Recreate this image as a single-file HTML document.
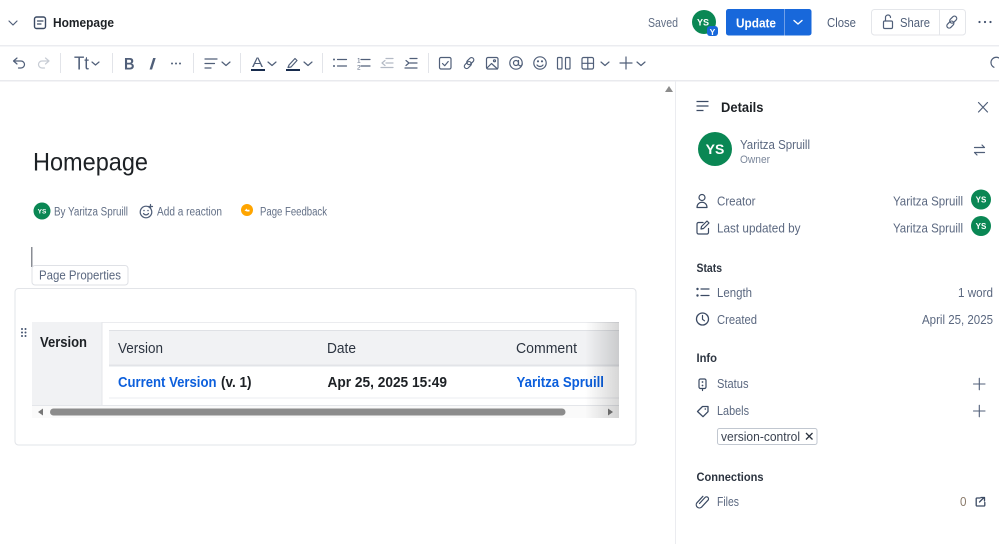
<!DOCTYPE html>
<html><head><meta charset="utf-8"><title>Homepage</title>
<style>
html,body{margin:0;padding:0;background:#fff;width:999px;height:544px;overflow:hidden}
svg{display:block;font-family:"Liberation Sans",sans-serif}
.i{fill:none;stroke:#505f79;stroke-width:1.2;stroke-linecap:round;stroke-linejoin:round}
.d{fill:none;stroke:#3b4a63;stroke-width:1.2;stroke-linecap:round;stroke-linejoin:round}
.t{fill:#5b6880;font-size:13px}
.h{fill:#2c3440;font-size:12px;font-weight:bold}
.b{fill:#1d2125;font-size:14.5px;font-weight:bold}
.l{fill:#0c5fdc;font-size:14.5px;font-weight:bold}
.n{fill:#2c3440;font-size:15px}
.s{fill:#e2e4e9}
</style></head><body>
<svg width="999" height="544" viewBox="0 0 999 544" xmlns="http://www.w3.org/2000/svg">
<defs><linearGradient id="g" x1="0" x2="1" y1="0" y2="0"><stop offset="0" stop-color="#000" stop-opacity="0"/><stop offset="1" stop-color="#000" stop-opacity=".16"/></linearGradient></defs>
<rect width="999" height="544" fill="#fff"/>

<!-- top bar -->
<path class="i" d="M9 21l4 4 4-4"/>
<rect class="d" x="34.500" y="17" width="11" height="11.500" rx="2" style="stroke-width:1.400"/>
<path class="d" d="M37.500 21h5.500M37.500 24h3.500"/>
<text x="53" y="27" textLength="61" lengthAdjust="spacingAndGlyphs" font-size="13" font-weight="bold" fill="#1d2125">Homepage</text>
<text x="648" y="27" textLength="30" lengthAdjust="spacingAndGlyphs" font-size="13" fill="#626f86">Saved</text>
<circle cx="704" cy="22" r="12" fill="#0a8754"/>
<text x="703" y="25.500" text-anchor="middle" font-size="9" font-weight="bold" fill="#fff">YS</text>
<rect x="707" y="26" width="11" height="10" rx="3" fill="#1868db"/>
<text x="712.500" y="35" text-anchor="middle" font-size="8.500" font-weight="bold" fill="#fff">Y</text>
<rect x="726" y="9" width="85.500" height="26.500" rx="2.500" fill="#1868db"/>
<rect x="784" y="9" width="1" height="26.500" fill="#6f9fe8"/>
<text x="736" y="27.500" textLength="40" lengthAdjust="spacingAndGlyphs" font-size="13" font-weight="bold" fill="#fff">Update</text>
<path d="M794 20.500l4 3.500 4-3.500" fill="none" stroke="#fff" stroke-width="1.400" stroke-linecap="round"/>
<text x="827" y="27" textLength="29" lengthAdjust="spacingAndGlyphs" font-size="13" fill="#505f79">Close</text>
<rect x="871.500" y="9.500" width="94" height="25.500" rx="3" fill="#fff" stroke="#e4e6ea"/>
<rect x="939" y="9" width="1" height="26" fill="#e4e6ea"/>
<rect class="i" x="883.500" y="21" width="9" height="7.500" rx="1.200"/>
<path class="i" d="M885.500 21v-3.500a2.500 2.500 0 0 1 5 0"/>
<text x="900" y="27" textLength="30" lengthAdjust="spacingAndGlyphs" font-size="13" fill="#505f79">Share</text>
<g class="i"><rect x="945.500" y="20" width="8" height="4.600" rx="2.300" transform="rotate(-45 949.500 22.300) translate(-1 2.200)"/><rect x="950.500" y="20" width="8" height="4.600" rx="2.300" transform="rotate(-45 954.500 22.300) translate(1 -2.800)"/></g>
<circle cx="979.500" cy="22" r="1.100" fill="#44546f"/><circle cx="985" cy="22" r="1.100" fill="#44546f"/><circle cx="990.500" cy="22" r="1.100" fill="#44546f"/>
<rect x="0" y="45" width="999" height="1.500" fill="#ebecf0"/>

<!-- toolbar -->
<g class="i">
<path d="M17 58l-3.500 3 3.500 3M14 61h7a3.500 3.500 0 0 1 0 7h-2.500"/>
<path style="stroke:#c7ccd4" d="M45.500 58l3.500 3-3.500 3M49 61h-7a3.500 3.500 0 0 0 0 7h2.500"/>
<path d="M92 62l3.500 3 3.500-3"/>
<path d="M222 62l4 3.500 4-3.500"/>
<path d="M268 62l4 3.500 4-3.500"/>
<path d="M304 62l4 3.500 4-3.500"/>
<path d="M601 62l4 3.500 4-3.500"/>
<path d="M637 62l4 3.500 4-3.500"/>
<path d="M205 59h12M205 63.500h9.500M205 68h6"/>
<path d="M337.500 59.500h9M337.500 66h9"/>
<path d="M361 59.500h9M361 66h9"/>
<path style="stroke:#b3bac5" d="M386 58.500h7M386 63h7M381 67.500h12M385 60.500l-3 2.500 3 2.500"/>
<path d="M410 58.500h7M410 63h7M405 68h12M406 60.500l3 2.500-3 2.500"/>
<rect x="439.500" y="57.500" width="11.500" height="11.500" rx="1.500"/>
<path d="M442.500 63.500l2.200 2.200 3.500-4.200"/>
<rect x="462.500" y="60.800" width="8" height="4.600" rx="2.300" transform="rotate(-45 466.500 63) translate(-.5 2.300)"/>
<rect x="467.500" y="60.800" width="8" height="4.600" rx="2.300" transform="rotate(-45 471.500 63) translate(.5 -2.300)"/>
<rect x="486.500" y="57.500" width="11.500" height="11.500" rx="1.500"/>
<path d="M487 68l4.500-4.500 6 5.500"/><circle cx="494.500" cy="60.800" r="1"/>
<circle cx="516" cy="63" r="6.200"/><circle cx="516" cy="63" r="2.500"/><path d="M518.500 60.500v3.500a1.800 1.800 0 0 0 3.700 0"/>
<circle cx="540" cy="63" r="6.200"/><path d="M537 65c1.500 2 4.500 2 6 0"/>
<circle cx="538" cy="61.300" r=".5"/><circle cx="542" cy="61.300" r=".5"/>
<rect x="557.500" y="57.500" width="4.500" height="11.500" rx="1"/><rect x="565.500" y="57.500" width="4.500" height="11.500" rx="1"/>
<rect x="582" y="57.500" width="11.500" height="11.500" rx="1.500"/><path d="M582 63.300h11.500M587.800 57.500v11.500"/>
<path d="M620 63h12M626 57v12"/>
<path d="M991 62.500a5.300 5.300 0 0 1 10.600 0"/><path d="M991 62.500a5.300 5.300 0 0 0 3 4.800"/>
</g>
<text x="74" y="69.500" textLength="15" lengthAdjust="spacingAndGlyphs" font-size="18" fill="#505f79">Tt</text>
<text x="124" y="69.500" textLength="10.500" lengthAdjust="spacingAndGlyphs" font-size="17" font-weight="bold" fill="#505f79">B</text>
<text x="148.500" y="69.500" textLength="7.500" lengthAdjust="spacingAndGlyphs" font-size="17" font-style="italic" fill="#505f79">I</text>
<circle cx="172" cy="63.500" r="1" fill="#505f79"/><circle cx="176" cy="63.500" r="1" fill="#505f79"/><circle cx="180" cy="63.500" r="1" fill="#505f79"/>
<text x="252" y="67" textLength="11" lengthAdjust="spacingAndGlyphs" font-size="14" fill="#505f79">A</text>
<rect x="251" y="69" width="14" height="2" fill="#172b4d"/>
<path class="i" d="M289 65l-1 2.500 3-.5 6-6.500-2-2-6 6.500z"/>
<rect x="286" y="69" width="14" height="2" fill="#172b4d"/>
<circle cx="334" cy="59.500" r="1" fill="#505f79"/><circle cx="334" cy="66" r="1" fill="#505f79"/>
<text x="357" y="62.500" font-size="6.500" fill="#505f79">1</text><text x="357" y="69.500" font-size="6.500" fill="#505f79">2</text>
<rect class="s" x="60" y="53" width="1" height="20"/><rect class="s" x="112" y="53" width="1" height="20"/><rect class="s" x="193" y="53" width="1" height="20"/><rect class="s" x="240" y="53" width="1" height="20"/><rect class="s" x="322" y="53" width="1" height="20"/><rect class="s" x="428" y="53" width="1" height="20"/>
<rect x="0" y="80" width="999" height="1.500" fill="#e9eaee"/>

<!-- content -->
<rect x="675" y="81" width="1" height="463" fill="#ebecf0"/>
<path d="M669 86l4 6h-8z" fill="#8c8c8c"/>
<text x="33" y="170.500" textLength="115" lengthAdjust="spacingAndGlyphs" font-size="25" fill="#1d2125">Homepage</text>
<circle cx="42" cy="211" r="8.500" fill="#0a8754"/>
<text x="42" y="213.500" text-anchor="middle" font-size="6.500" font-weight="bold" fill="#fff">YS</text>
<text x="54" y="215.500" textLength="74" lengthAdjust="spacingAndGlyphs" font-size="11.500" fill="#626f86">By Yaritza Spruill</text>
<circle class="i" cx="146" cy="212" r="5.800"/><path class="i" d="M143.500 213.500c1.300 1.800 3.700 1.800 5 0M150.500 204.500v4M148.500 206.500h4"/>
<circle cx="144" cy="210.500" r=".8" fill="#505f79"/><circle cx="148" cy="210.500" r=".8" fill="#505f79"/>
<text x="157" y="215.500" textLength="65" lengthAdjust="spacingAndGlyphs" font-size="11.500" fill="#626f86">Add a reaction</text>
<circle cx="247" cy="210" r="6" fill="#ffa500"/><path d="M244.500 210.500l2.500-2v1.200h2.500v1.800h-2.500" fill="#fff"/>
<text x="260" y="215.500" textLength="67" lengthAdjust="spacingAndGlyphs" font-size="11.500" fill="#626f86">Page Feedback</text>
<rect x="31" y="247" width="1.500" height="20" fill="#8a8d94"/>
<rect x="32" y="265.500" width="96" height="19.500" rx="3" fill="#fff" stroke="#dfe1e6"/>
<text x="39" y="279.500" textLength="82" lengthAdjust="spacingAndGlyphs" font-size="12.500" fill="#5b6880">Page Properties</text>
<rect x="15" y="288.500" width="621" height="156.500" rx="3.500" fill="#fff" stroke="#e2e4e8"/>
<g fill="#44546f"><circle cx="22" cy="329" r="1"/><circle cx="25.500" cy="329" r="1"/><circle cx="22" cy="332.500" r="1"/><circle cx="25.500" cy="332.500" r="1"/><circle cx="22" cy="336" r="1"/><circle cx="25.500" cy="336" r="1"/></g>

<rect x="32" y="322" width="587" height="1" fill="#ebecef"/>
<rect x="32" y="322" width="70" height="84" fill="#f1f2f4"/>
<rect x="101.500" y="322" width="1" height="84" fill="#e4e6ea"/>
<text x="40" y="347" textLength="47" lengthAdjust="spacingAndGlyphs" class="b">Version</text>
<rect x="109" y="330" width="510" height="35" fill="#f1f2f4"/>
<rect x="109" y="330" width="510" height="1" fill="#dfe1e5"/>
<rect x="109" y="364.500" width="510" height="2" fill="#e2e4e8"/>
<rect x="109" y="397.500" width="510" height="1" fill="#ebecf0"/>
<rect x="32" y="405" width="587" height="1" fill="#e4e6ea"/>
<text x="118" y="353" textLength="45" lengthAdjust="spacingAndGlyphs" class="n">Version</text>
<text x="327" y="353" textLength="29" lengthAdjust="spacingAndGlyphs" class="n">Date</text>
<text x="516" y="353" textLength="61" lengthAdjust="spacingAndGlyphs" class="n">Comment</text>
<text x="118" y="387" textLength="98.500" lengthAdjust="spacingAndGlyphs" class="l">Current Version</text>
<text x="221" y="387" textLength="30.500" lengthAdjust="spacingAndGlyphs" class="b">(v. 1)</text>
<text x="327.500" y="387" textLength="119.500" lengthAdjust="spacingAndGlyphs" class="b">Apr 25, 2025 15:49</text>
<text x="516.500" y="387" textLength="87.500" lengthAdjust="spacingAndGlyphs" class="l">Yaritza Spruill</text>
<rect x="32" y="406" width="587" height="12" fill="#fafafa"/>
<rect x="50" y="408.500" width="515.500" height="7" rx="3.500" fill="#8c8c8c"/>
<path d="M38 412l5-3.500v7zM613 412l-5-3.500v7z" fill="#777"/>
<rect x="585" y="322" width="34" height="96" fill="url(#g)"/>

<!-- side panel -->
<path d="M696.500 101.500h12M696.500 106h12M696.500 110.500h7" fill="none" stroke="#3b4a63" stroke-width="1.300"/>
<text x="721" y="112" textLength="42.500" lengthAdjust="spacingAndGlyphs" font-size="14" font-weight="bold" fill="#1d2125">Details</text>
<path d="M978.500 102.500l9 9.500M987.500 102.500l-9 9.500" fill="none" stroke="#505f79" stroke-width="1.200" stroke-linecap="round"/>
<circle cx="715" cy="149" r="17" fill="#0a8754"/>
<text x="715" y="154" text-anchor="middle" font-size="14" font-weight="bold" fill="#fff">YS</text>
<text x="740" y="149" textLength="70" lengthAdjust="spacingAndGlyphs" class="t">Yaritza Spruill</text>
<text x="740" y="163" textLength="30" lengthAdjust="spacingAndGlyphs" font-size="11" fill="#7a869a">Owner</text>
<path class="i" d="M974.500 147.500h10l-2.500-2.500M984.500 152.500h-10l2.500 2.500"/>

<circle class="d" cx="702" cy="197.500" r="3"/><path class="d" d="M697 207.500c0-7 10-7 10 0z"/>
<text x="717" y="205.500" textLength="38.500" lengthAdjust="spacingAndGlyphs" class="t">Creator</text>
<text x="893" y="205.500" textLength="70" lengthAdjust="spacingAndGlyphs" class="t">Yaritza Spruill</text>
<circle cx="981" cy="199.500" r="10" fill="#0a8754"/>
<text x="981" y="202.500" text-anchor="middle" font-size="8" font-weight="bold" fill="#fff">YS</text>
<path class="d" d="M703 222.500h-4.500a1.500 1.500 0 0 0-1.500 1.500v8.500a1.500 1.500 0 0 0 1.500 1.500h8.500a1.500 1.500 0 0 0 1.500-1.500v-4M701 229l.5-2.500 5.500-5.500 2 2-5.500 5.500z"/>
<text x="717" y="232.500" textLength="83.500" lengthAdjust="spacingAndGlyphs" class="t">Last updated by</text>
<text x="893" y="232.500" textLength="70" lengthAdjust="spacingAndGlyphs" class="t">Yaritza Spruill</text>
<circle cx="981" cy="226" r="10" fill="#0a8754"/>
<text x="981" y="229" text-anchor="middle" font-size="8" font-weight="bold" fill="#fff">YS</text>

<text x="696.500" y="272" textLength="25.500" lengthAdjust="spacingAndGlyphs" class="h">Stats</text>
<circle cx="697.500" cy="289" r="1.200" fill="#3b4a63"/><circle cx="697.500" cy="295.500" r="1.200" fill="#3b4a63"/>
<path class="d" d="M701 289h8M701 295.500h8"/>
<text x="717" y="297" textLength="35" lengthAdjust="spacingAndGlyphs" class="t">Length</text>
<text x="958" y="297" textLength="35" lengthAdjust="spacingAndGlyphs" class="t">1 word</text>
<circle cx="702.500" cy="319" r="6" fill="none" stroke="#3b4a63" stroke-width="1.300"/><path class="d" d="M702.500 315.500v3.800l2 1.500"/>
<text x="717" y="324" textLength="40" lengthAdjust="spacingAndGlyphs" class="t">Created</text>
<text x="922" y="324" textLength="71" lengthAdjust="spacingAndGlyphs" class="t">April 25, 2025</text>
<text x="696.500" y="362" textLength="20.500" lengthAdjust="spacingAndGlyphs" class="h">Info</text>
<rect class="d" x="699" y="379" width="7" height="9.500" rx="1.500"/><path class="d" d="M702.500 388.500v2"/><circle cx="702.500" cy="382" r=".9" fill="#3b4a63"/><circle cx="702.500" cy="385.500" r=".9" fill="#3b4a63"/>
<text x="717" y="388" textLength="31.500" lengthAdjust="spacingAndGlyphs" class="t">Status</text>
<path class="i" d="M973.500 384h11.500M979.300 378.300v11.500" style="stroke-width:1.100"/>
<path class="d" d="M697.500 411.500l5-5h5.500v5.200l-5 5z" style="stroke-width:1.300"/><circle cx="705.300" cy="409" r=".8" fill="#3b4a63"/>
<text x="717" y="415" textLength="32" lengthAdjust="spacingAndGlyphs" class="t">Labels</text>
<path class="i" d="M973.500 411h11.500M979.300 405.300v11.500" style="stroke-width:1.100"/>
<rect x="717.500" y="428.500" width="99.500" height="16" rx="2" fill="#fff" stroke="#c1c7d0"/>
<text x="721" y="441" textLength="79" lengthAdjust="spacingAndGlyphs" font-size="13" fill="#3a4250">version-control</text>
<path d="M806 433l6.500 6.500M812.500 433l-6.500 6.500" fill="none" stroke="#2c3440" stroke-width="1.300"/>
<text x="696.500" y="481" textLength="67" lengthAdjust="spacingAndGlyphs" class="h">Connections</text>
<path class="d" d="M699.500 503.500l5.500-6a2 2 0 0 1 3 2.700l-6.500 7a3.200 3.200 0 0 1-4.600-4.400l6-6.500" style="stroke-width:1.200"/>
<text x="717" y="506" textLength="22" lengthAdjust="spacingAndGlyphs" class="t">Files</text>
<text x="960" y="506" textLength="6.500" lengthAdjust="spacingAndGlyphs" font-size="13" fill="#8a7a6a">0</text>
<path class="d" d="M980 498h-3a.8.800 0 0 0-.8.800v6.400a.8.800 0 0 0 .8.800h7a.8.800 0 0 0 .8-.8v-2.700M979.500 502l4.500-4.500M981 497.500h3.500v3.500" style="stroke-width:1.300"/>
</svg>
</body></html>
